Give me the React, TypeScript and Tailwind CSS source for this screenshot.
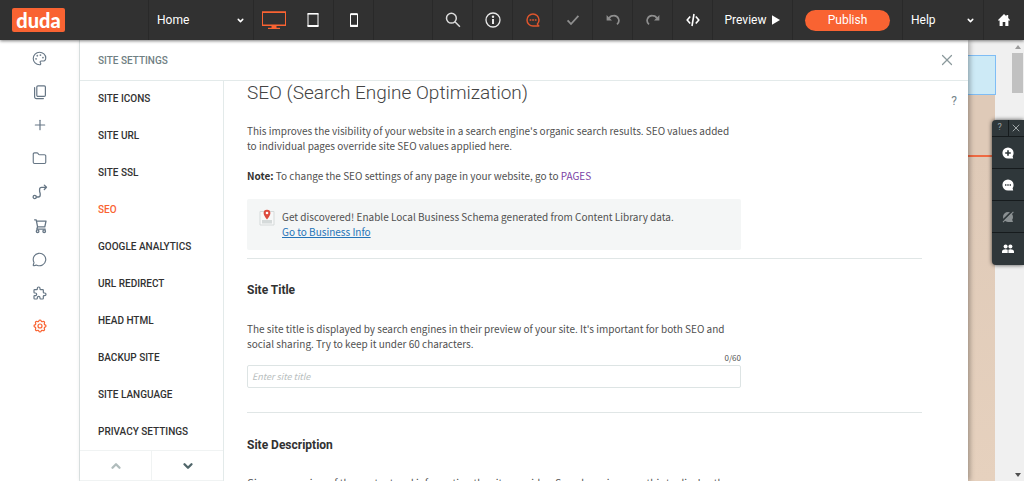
import { useState } from "react";
import type { ReactNode } from "react";
import { ChevronDown, ChevronUp, Folder, MessageCircle, Palette, Plus, X } from "lucide-react";
import { TbPuzzle, TbSettings } from "react-icons/tb";

const MENU_ITEMS = [
  "Site Icons",
  "Site URL",
  "Site SSL",
  "SEO",
  "Google Analytics",
  "URL Redirect",
  "Head HTML",
  "Backup Site",
  "Site Language",
  "Privacy Settings",
];

function CopyIcon() {
  return (
    <svg width="16" height="16" viewBox="0 0 16 16" fill="none" stroke="currentColor" strokeWidth="1.2" strokeLinejoin="round" strokeLinecap="round">
      <rect x="4.8" y="1.8" width="8.6" height="10.6" rx="1.2" />
      <path d="M2.6 3.6v9.2a1.8 1.8 0 0 0 1.8 1.8h7" />
    </svg>
  );
}

function RouteIcon() {
  return (
    <svg width="16" height="16" viewBox="0 0 16 16" fill="none" stroke="currentColor" strokeWidth="1.3" strokeLinejoin="round" strokeLinecap="round">
      <circle cx="2.7" cy="13" r="1.6" />
      <path d="M4.5 13h1.7a2 2 0 0 0 2-2V9.8c0-1-.6-1.5-.6-2.6V5.3a2 2 0 0 1 2-2h4.9M12.3 1.1l2.2 2.2-2.2 2.2" />
    </svg>
  );
}

function CartIcon() {
  return (
    <svg width="16" height="16" viewBox="0 0 16 16" fill="none" stroke="currentColor" strokeWidth="1.3" strokeLinejoin="round" strokeLinecap="round">
      <path d="M2.6 1.8h1.6l1.4 7h7.2L14 3.2H4.6M5.6 8.8l-.8 2.4h8.4" />
      <circle cx="5.6" cy="13.2" r="1.3" />
      <circle cx="12.2" cy="13.2" r="1.3" />
    </svg>
  );
}

const RAIL: { label: string; icon: ReactNode; active?: boolean }[] = [
  { label: "Design", icon: <Palette size={15} strokeWidth={1.8} /> },
  { label: "Pages", icon: <CopyIcon /> },
  { label: "Widgets", icon: <Plus size={16} strokeWidth={1.8} /> },
  { label: "Content", icon: <Folder size={15} strokeWidth={1.8} /> },
  { label: "Personalize", icon: <RouteIcon /> },
  { label: "Store", icon: <CartIcon /> },
  { label: "Blog", icon: <MessageCircle size={15} strokeWidth={1.8} /> },
  { label: "Apps", icon: <TbPuzzle size={16} strokeWidth={1.8} /> },
  { label: "Settings", icon: <TbSettings size={16} strokeWidth={1.8} />, active: true },
];

function BarButton({ label, children, className = "" }: { label: string; children: ReactNode; className?: string }) {
  return (
    <button
      type="button"
      aria-label={label}
      className={`flex w-10 shrink-0 items-center justify-center border-r border-[#292929] ${className}`}
    >
      {children}
    </button>
  );
}

function TopBar() {
  return (
    <header className="relative z-20 flex h-10 shrink-0 bg-[#313131] text-xs text-white shadow-[0_1px_3px_rgba(0,0,0,0.5)]">
      <div className="flex w-[149px] shrink-0 items-center border-r border-[#292929] pl-3">
        <a
          href="#"
          className="flex h-6 w-[53px] items-center justify-center rounded-xs bg-[#f96332] pb-px font-[Lato,sans-serif] text-[20px] leading-6 font-black"
        >
          duda
        </a>
      </div>
      <button type="button" className="flex w-[105px] shrink-0 items-center justify-between border-r border-[#292929] px-2">
        Home
        <ChevronDown size={9} strokeWidth={4} />
      </button>
      <div className="flex w-20 shrink-0 border-r border-[#292929]">
        <button type="button" aria-label="Desktop view" className="flex w-10 items-center justify-center text-[#f96332]">
          <svg width="24" height="18" viewBox="0 0 24 18" fill="none" stroke="currentColor">
            <rect x="0.5" y="1" width="23" height="13.5" />
            <path d="M0 14.3h24M0 1.2h24" strokeWidth="1.4" />
            <path d="M9.5 15h5v2.2h-5z" fill="currentColor" stroke="none" />
            <path d="M6 17.4h12" strokeWidth="1.2" />
          </svg>
        </button>
        <button type="button" aria-label="Tablet view" className="flex w-10 items-center justify-center">
          <svg width="12" height="16" viewBox="0 0 12 16" fill="none" stroke="currentColor">
            <rect x="1" y="1.5" width="10" height="13" rx="0.5" />
            <path d="M.5 1.8h11" strokeWidth="1.6" />
            <path d="M.5 14h11" strokeWidth="2" />
          </svg>
        </button>
      </div>
      <BarButton label="Phone view">
        <svg width="8" height="16" viewBox="0 0 8 16" fill="none" stroke="currentColor">
          <rect x="0.5" y="1.7" width="7" height="12.8" rx="0.5" />
          <path d="M0 2.4h8" strokeWidth="1.4" />
          <path d="M0 13.8h8" strokeWidth="2" />
        </svg>
      </BarButton>
      <div className="flex-1 border-r border-[#292929]" />
      <BarButton label="Search">
        <svg width="16" height="16" viewBox="0 0 16 16" fill="none" stroke="#dcdcdc" strokeWidth="1.5">
          <circle cx="6.4" cy="6.2" r="4.9" />
          <path d="M9.9 9.8l5 5" />
        </svg>
      </BarButton>
      <BarButton label="Info">
        <svg width="16" height="16" viewBox="0 0 16 16" fill="none" stroke="#e8e8e8">
          <circle cx="8" cy="8" r="7" strokeWidth="1.3" />
          <path d="M8 7v5" strokeWidth="2" />
          <circle cx="8" cy="4.8" r="1.2" fill="#e8e8e8" stroke="none" />
        </svg>
      </BarButton>
      <BarButton label="Comments" className="text-[#dd552d]">
        <svg width="14" height="14" viewBox="0 0 14 14" fill="none" stroke="currentColor" strokeWidth="1.5">
          <path d="M12.8 13H7A6 6 0 1 1 13 7c0 1.7-.6 3-1.6 4.1z" strokeLinejoin="round" />
          <path d="M3.6 7h1.7M6.2 7h1.7M8.8 7h1.7" strokeWidth="1.7" />
        </svg>
      </BarButton>
      <BarButton label="Save" className="text-[#8f8f8f]">
        <svg width="14" height="12" viewBox="0 0 14 12" fill="none" stroke="currentColor" strokeWidth="1.8">
          <path d="M1.6 6.4L5 10l7.4-8.2" />
        </svg>
      </BarButton>
      <BarButton label="Undo" className="text-[#8f8f8f]">
        <svg width="14" height="14" viewBox="0 0 14 14" fill="none" stroke="currentColor" strokeWidth="1.7">
          <path d="M3 5.2C4 3.5 5.6 2.6 7.6 2.6a4.9 4.9 0 0 1 3.4 8.7" />
          <path d="M.6 2v5.4H6z" fill="currentColor" stroke="none" />
        </svg>
      </BarButton>
      <BarButton label="Redo" className="text-[#8f8f8f]">
        <svg width="14" height="14" viewBox="0 0 14 14" fill="none" stroke="currentColor" strokeWidth="1.7">
          <path d="M11 5.2C10 3.5 8.4 2.6 6.4 2.6a4.9 4.9 0 0 0-3.4 8.7" />
          <path d="M13.4 2v5.4H8z" fill="currentColor" stroke="none" />
        </svg>
      </BarButton>
      <BarButton label="Developer mode">
        <svg width="14" height="14" viewBox="0 0 14 14" fill="none" stroke="currentColor" strokeWidth="1.6">
          <path d="M4.2 3.4L1.2 7l3 3.6M9.8 3.4l3 3.6-3 3.6M8 1L6 13" />
        </svg>
      </BarButton>
      <button type="button" className="flex w-20 shrink-0 items-center justify-center gap-1.5 border-r border-[#292929]">
        Preview
        <svg width="8" height="10" viewBox="0 0 8 10" fill="currentColor">
          <path d="M0 .3L8 5 0 9.700z" />
        </svg>
      </button>
      <div className="flex w-[110px] shrink-0 items-center justify-center border-r border-[#292929]">
        <button type="button" className="h-[21px] w-[85px] rounded-full bg-[#f96332]">
          Publish
        </button>
      </div>
      <button type="button" className="flex w-[81px] shrink-0 items-center justify-between border-r border-[#292929] px-2">
        Help
        <ChevronDown size={9} strokeWidth={4} />
      </button>
      <button type="button" aria-label="Dashboard" className="flex w-10 shrink-0 items-center justify-center">
        <svg width="12" height="12" viewBox="0 0 12 12" fill="currentColor">
          <path d="M6 0l2.4 2.3V1h1.8v3.1L12 6v.6h-1.6V12H7.3V8H4.7v4H1.6V6.6H0V6z" />
        </svg>
      </button>
    </header>
  );
}

function SideRail() {
  return (
    <nav className="w-20 shrink-0 border-r border-[#e3eaea] pt-[10px]">
      <ul className="flex h-[284px] flex-col items-center justify-between">
        {RAIL.map((item) => (
          <li key={item.label}>
            <button
              type="button"
              aria-label={item.label}
              className={`flex size-4 items-center justify-center ${item.active ? "text-[#f96332]" : "text-[#667685]"}`}
            >
              {item.icon}
            </button>
          </li>
        ))}
      </ul>
    </nav>
  );
}

function SettingsMenu() {
  const [active, setActive] = useState("SEO");

  return (
    <div className="flex w-36 shrink-0 flex-col border-r border-[#e3eaea]">
      <ul className="flex min-h-0 flex-1 flex-col">
        {MENU_ITEMS.map((item) => (
          <li key={item} className="flex min-h-0 flex-1">
            <button
              type="button"
              onClick={() => setActive(item)}
              className={`w-full pb-px pl-[18px] text-left text-[10px] font-medium uppercase ${
                item === active ? "text-[#f96332]" : "text-[#313131]"
              }`}
            >
              {item}
            </button>
          </li>
        ))}
      </ul>
      <div className="flex h-[31px] shrink-0 border-y border-[#f0f3f3]">
        <button type="button" aria-label="Scroll up" className="flex flex-1 items-center justify-center border-r border-[#f0f3f3] text-[#b0bcbc]">
          <ChevronUp size={14} strokeWidth={4} />
        </button>
        <button type="button" aria-label="Scroll down" className="flex flex-1 items-center justify-center text-[#50666a]">
          <ChevronDown size={14} strokeWidth={4} />
        </button>
      </div>
    </div>
  );
}

function MapPinIcon() {
  return (
    <svg width="16" height="17" viewBox="0 0 16 17" className="shrink-0">
      <path d="M1 2.500h14v13.500H1z" fill="#f7f8f8" stroke="#d5dada" />
      <path d="M3 11h10v3.500H3z" fill="#d5dada" />
      <path d="M8 10.600C6 8 4.600 6.300 4.600 4.100a3.400 3.400 0 0 1 6.800 0C11.400 6.300 10 8 8 10.600z" fill="#dd4b3e" />
      <circle cx="8" cy="4" r="1.300" fill="#fff" />
    </svg>
  );
}

function SeoForm() {
  const [title, setTitle] = useState("");

  return (
    <main className="relative min-w-0 flex-1 overflow-hidden pr-[46px] pl-[23px] font-['Noto_Sans_CJK_SC',sans-serif] text-[10px] leading-[15px] text-[#505050]">
      <button type="button" aria-label="Help" className="absolute top-3 right-2 w-3 text-center font-[Roboto,sans-serif] text-xs text-[#75858a]">
        ?
      </button>
      <h1 className="font-[Roboto,sans-serif] text-[19px] leading-6 font-light text-[#444]">
        SEO (Search Engine Optimization)
      </h1>
      <section className="max-w-[494px]">
        <p className="mt-[18px]">
          This improves the visibility of your website in a search engine's organic search results. SEO values added to
          individual pages override site SEO values applied here.
        </p>
        <p className="mt-[15px]">
          <b className="text-[#313131]">Note:</b> To change the SEO settings of any page in your website, go to{" "}
          <a href="#" className="text-[#7a3fa5]">
            PAGES
          </a>
        </p>
        <div className="mt-4 flex gap-[7px] rounded-xs bg-[#f4f6f6] px-3 pt-2.5 pb-[11px]">
          <MapPinIcon />
          <p>
            Get discovered! Enable Local Business Schema generated from Content Library data.
            <br />
            <a href="#" className="text-[#2574b8] underline">
              Go to Business Info
            </a>
          </p>
        </div>
      </section>
      <hr className="mt-2 border-[#e0e6e6]" />
      <section className="max-w-[494px] pt-[23px]">
        <h2 className="font-[Roboto,sans-serif] text-xs leading-4 font-bold text-[#313131]">
          <label htmlFor="site-title">Site Title</label>
        </h2>
        <p className="mt-[23px]">
          The site title is displayed by search engines in their preview of your site. It's important for both SEO and
          social sharing. Try to keep it under 60 characters.
        </p>
        <p className="text-right text-[8px] leading-[14px]">{title.length}/60</p>
        <input
          id="site-title"
          type="text"
          maxLength={60}
          placeholder="Enter site title"
          value={title}
          onChange={(e) => setTitle(e.target.value)}
          className="block h-[23px] w-full rounded-xs border border-[#dde4e4] px-1 text-[9px] placeholder:text-[#b8bebe] placeholder:italic"
        />
      </section>
      <hr className="mt-6 border-[#e0e6e6]" />
      <section className="max-w-[494px] pt-6">
        <h2 className="font-[Roboto,sans-serif] text-xs leading-4 font-bold text-[#313131]">Site Description</h2>
        <p className="mt-[22px]">
          Give an overview of the content and information the site provides. Search engines use this to display the
        </p>
      </section>
    </main>
  );
}

function CommentBubble({ children }: { children: ReactNode }) {
  return (
    <svg width="12" height="12" viewBox="0 0 12 12" stroke="#2f373a">
      <path d="M11.2 11.6H6A5.6 5.6 0 1 1 11.6 6c0 1.2-.4 2.3-1 3.200z" fill="#fff" stroke="none" />
      {children}
    </svg>
  );
}

function ReviewTools() {
  return (
    <aside className="absolute top-20 right-0 w-8 divide-y divide-[#161b1d] rounded-l-sm bg-[#2f373a] text-white shadow-[0_0_4px_rgba(0,0,0,0.7)]">
      <div className="flex h-[17px] divide-x divide-[#161b1d] text-[#a0a6a8]">
        <button type="button" aria-label="Help" className="flex-1 text-[9px]">
          ?
        </button>
        <button type="button" aria-label="Close tools" className="flex flex-1 items-center justify-center">
          <X size={12} strokeWidth={2} />
        </button>
      </div>
      <button type="button" aria-label="Add comment" className="flex h-8 w-full items-center justify-center">
        <CommentBubble>
          <path d="M6 3.2v5.6M3.2 6h5.6" strokeWidth="1.6" />
        </CommentBubble>
      </button>
      <button type="button" aria-label="Show comments" className="flex h-8 w-full items-center justify-center">
        <CommentBubble>
          <path d="M3 6h1.400M5.300 6h1.400M7.600 6H9" strokeWidth="1.300" />
        </CommentBubble>
      </button>
      <button type="button" aria-label="Hide comments" className="flex h-8 w-full items-center justify-center">
        <svg width="12" height="12" viewBox="0 0 12 12">
          <path d="M11 11H6a5 5 0 1 1 5-5c0 1.200-.3 2-.8 2.800z" fill="#8a9092" />
          <path d="M.5 9.800L10.200.2" stroke="#2f373a" strokeWidth="1.800" />
          <path d="M1 11.200L11.400.8" stroke="#8a9092" strokeWidth="1.100" />
        </svg>
      </button>
      <button type="button" aria-label="Collaborators" className="flex h-8 w-full items-center justify-center">
        <svg width="12" height="10" viewBox="0 0 12 10" fill="currentColor">
          <circle cx="3.600" cy="2.500" r="2" />
          <circle cx="8.400" cy="2.500" r="2" />
          <path d="M0 9V7.400C0 6 2 5.300 3.600 5.300c.9 0 1.600.2 2.100.5v3.200zM6.400 9V5.800c.6-.3 1.300-.5 2-.5C10 5.300 12 6 12 7.400V9z" />
        </svg>
      </button>
    </aside>
  );
}

function SitePreview() {
  return (
    <div className="relative flex w-14 shrink-0 bg-[#f0f0f0]">
      <div className="flex w-7 flex-col pt-[15px]">
        <div className="h-10 border border-l-0 border-[#7fbdf5] bg-[#cdeaf6]" />
        <div className="mr-px h-[60px] bg-[#dfcab8]" />
        <div className="mr-px h-0.5 bg-[#ef6a43]" />
        <div className="mr-px flex-1 bg-linear-to-b from-[#dfcab8] to-[#e6d1be]" />
      </div>
      <div className="mr-px ml-auto flex w-[11px] flex-col items-center pt-[5px] pb-1">
        <svg width="6" height="4" viewBox="0 0 6 4">
          <path d="M0 4l3-4 3 4z" fill="#9b9b9b" />
        </svg>
        <div className="mt-1 h-10 w-full bg-[#c1c1c1]" />
        <svg width="6" height="4" viewBox="0 0 6 4" className="mt-auto">
          <path d="M0 0l3 4 3-4z" fill="#505050" />
        </svg>
      </div>
      <ReviewTools />
    </div>
  );
}

export default function App() {
  return (
    <div className="flex h-screen flex-col overflow-hidden bg-white font-[Roboto,sans-serif]">
      <TopBar />
      <div className="flex min-h-0 flex-1">
        <SideRail />
        <div className="relative z-10 flex min-w-0 flex-1 flex-col bg-white shadow-[2px_0_5px_rgba(0,0,0,0.3)]">
          <div className="flex h-[41px] shrink-0 items-center justify-between border-b border-[#e3eaea] pr-3 pl-[18px]">
            <span className="text-[10px] font-medium text-[#6f8083] uppercase">Site Settings</span>
            <button type="button" aria-label="Close" className="text-[#8b999c]">
              <X size={18} strokeWidth={1.6} />
            </button>
          </div>
          <div className="flex min-h-0 flex-1">
            <SettingsMenu />
            <SeoForm />
          </div>
        </div>
        <SitePreview />
      </div>
    </div>
  );
}
